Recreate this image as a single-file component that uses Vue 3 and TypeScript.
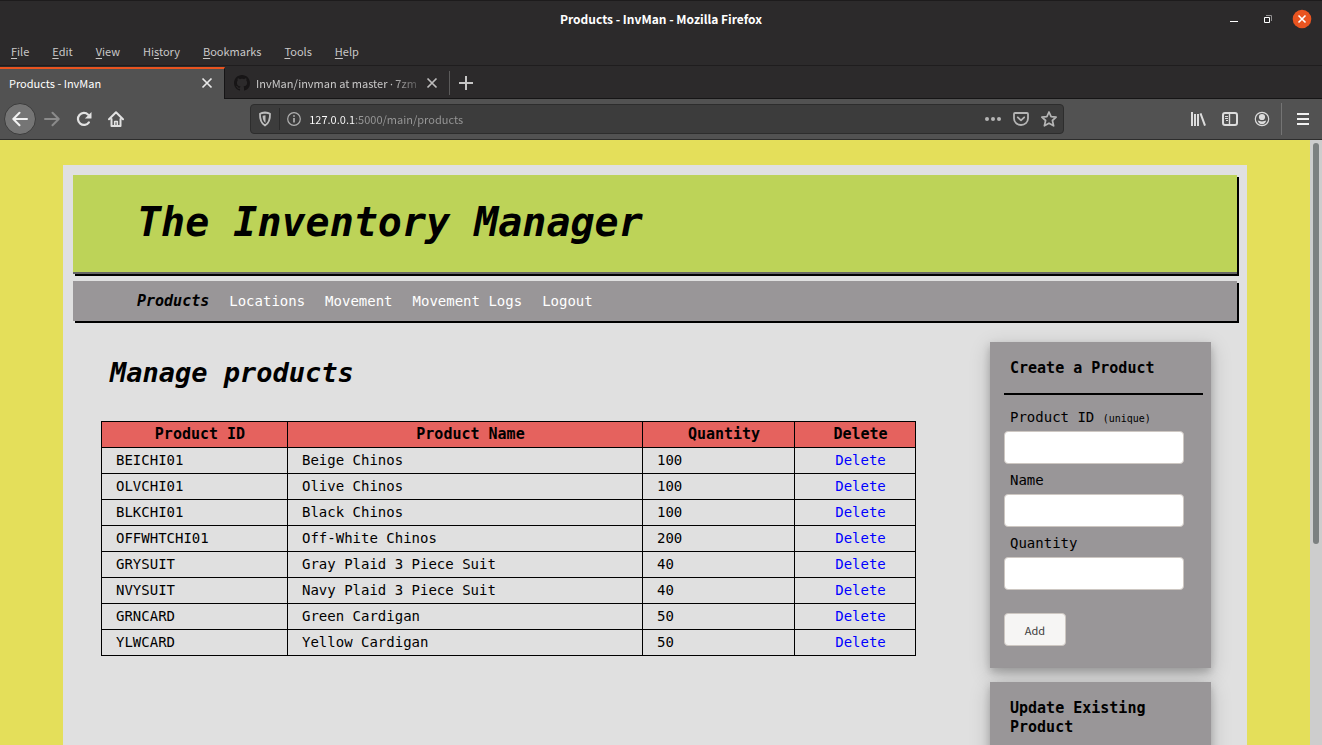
<script setup lang="ts">
import { ref } from 'vue'

interface Product {
  id: string
  name: string
  quantity: number
}

const menus = [
  { pre: '', key: 'F', post: 'ile' },
  { pre: '', key: 'E', post: 'dit' },
  { pre: '', key: 'V', post: 'iew' },
  { pre: 'Hi', key: 's', post: 'tory' },
  { pre: '', key: 'B', post: 'ookmarks' },
  { pre: '', key: 'T', post: 'ools' },
  { pre: '', key: 'H', post: 'elp' },
]

const links = ['Products', 'Locations', 'Movement', 'Movement Logs', 'Logout']

const products: Product[] = [
  { id: 'BEICHI01', name: 'Beige Chinos', quantity: 100 },
  { id: 'OLVCHI01', name: 'Olive Chinos', quantity: 100 },
  { id: 'BLKCHI01', name: 'Black Chinos', quantity: 100 },
  { id: 'OFFWHTCHI01', name: 'Off-White Chinos', quantity: 200 },
  { id: 'GRYSUIT', name: 'Gray Plaid 3 Piece Suit', quantity: 40 },
  { id: 'NVYSUIT', name: 'Navy Plaid 3 Piece Suit', quantity: 40 },
  { id: 'GRNCARD', name: 'Green Cardigan', quantity: 50 },
  { id: 'YLWCARD', name: 'Yellow Cardigan', quantity: 50 },
]

const address = ref('127.0.0.1:5000/main/products')
const newId = ref('')
const newName = ref('')
const newQuantity = ref('')
</script>

<template>
  <div class="window">
    <header class="titlebar">
      <span class="window-title">Products - InvMan - Mozilla Firefox</span>
      <div class="window-controls">
        <button class="icon-btn" aria-label="Minimize">
          <svg width="10" height="18"><path d="M1 11.500h8" stroke="#fff" /></svg>
        </button>
        <button class="icon-btn" aria-label="Restore">
          <svg width="10" height="18"><path d="M1.500 7.500h5v5h-5z" fill="none" stroke="#fff" /><path d="M3 5.500h5.500V11" fill="none" stroke="#918f90" /></svg>
        </button>
        <button class="icon-btn" aria-label="Close window">
          <svg width="20" height="20" viewBox="0 0 20 20"><circle cx="10" cy="10" r="9.300" fill="#e95420" /><path d="M6.500 6.500l7 7m0-7l-7 7" stroke="#fff" stroke-width="1.600" /></svg>
        </button>
      </div>
    </header>

    <nav class="menubar" aria-label="Menu">
      <button v-for="m in menus" :key="m.key + m.post" class="menu">{{ m.pre }}<span class="mnemonic">{{ m.key }}</span>{{ m.post }}</button>
    </nav>

    <div class="tabs">
      <div class="tab active">
        <button class="tab-label">Products - InvMan</button>
        <button class="icon-btn" aria-label="Close tab">
          <svg width="12" height="12" viewBox="0 0 12 12"><path d="M1.500 1.500l9 9m0-9l-9 9" stroke="#e8e8e8" stroke-width="1.700" /></svg>
        </button>
      </div>
      <div class="tab">
        <svg width="16" height="16" viewBox="0 0 16 16" fill="#171516"><path d="M8 0C3.580 0 0 3.580 0 8c0 3.540 2.290 6.530 5.470 7.590.4.070.550-.170.550-.380 0-.190-.010-.820-.010-1.490-2.010.370-2.530-.490-2.690-.940-.090-.230-.480-.940-.820-1.130-.280-.150-.680-.520-.010-.530.630-.010 1.080.580 1.230.820.720 1.210 1.870.870 2.330.660.070-.520.280-.870.510-1.070-1.780-.2-3.640-.890-3.640-3.950 0-.870.310-1.590.820-2.150-.080-.2-.360-1.020.080-2.120 0 0 .670-.210 2.200.820.640-.180 1.320-.270 2-.270s1.360.090 2 .270c1.530-1.040 2.200-.820 2.200-.820.440 1.100.160 1.920.080 2.120.510.560.820 1.270.820 2.150 0 3.070-1.870 3.750-3.650 3.950.290.250.540.730.540 1.480 0 1.070-.010 1.930-.010 2.200 0 .210.150.460.550.380A8.010 8.010 0 0 0 16 8c0-4.420-3.580-8-8-8z" /></svg>
        <button class="tab-label faded">InvMan/invman at master <span class="dot">·</span> 7zm</button>
        <button class="icon-btn" aria-label="Close tab">
          <svg width="12" height="12" viewBox="0 0 12 12"><path d="M1.500 1.500l9 9m0-9l-9 9" stroke="#bdbcbc" stroke-width="1.700" /></svg>
        </button>
      </div>
      <button class="icon-btn new-tab" aria-label="New tab">
        <svg width="14" height="14" viewBox="0 0 14 14"><path d="M7 0v14M0 7h14" stroke="#c6c5c5" stroke-width="2" /></svg>
      </button>
    </div>

    <div class="toolbar">
      <div class="group">
        <button class="icon-btn back" aria-label="Back">
          <svg width="16" height="16" viewBox="0 0 16 16" fill="none" stroke="#f2f2f2" stroke-width="2" stroke-linecap="round" stroke-linejoin="round"><path d="M15 8H1.500M7.500 1.800L1.300 8l6.200 6.200" /></svg>
        </button>
        <button class="icon-btn" aria-label="Forward">
          <svg width="16" height="16" viewBox="0 0 16 16" fill="none" stroke="#8b8b8b" stroke-width="2" stroke-linecap="round" stroke-linejoin="round"><path d="M1 8h13.500M8.500 1.800L14.700 8l-6.200 6.200" /></svg>
        </button>
        <button class="icon-btn" aria-label="Reload">
          <svg width="16" height="16" viewBox="0 0 16 16"><path d="M12.900 11.300A6 6 0 1 1 12.200 3.700" fill="none" stroke="#e2e2e2" stroke-width="2.200" stroke-linecap="round" /><path d="M15.500 1v6a.6.6 0 0 1-.6.6h-6z" fill="#e2e2e2" /></svg>
        </button>
        <button class="icon-btn" aria-label="Home">
          <svg width="16" height="16" viewBox="0 0 16 16" fill="none" stroke="#e2e2e2" stroke-width="2" stroke-linejoin="round" stroke-linecap="round"><path d="M1 8.200L8 1.200l7 7M3.500 8v7h9V8" /><path d="M6.700 15v-4.500h2.600V15" stroke-width="1.600" /></svg>
        </button>
      </div>
      <div class="urlbar">
        <button class="icon-btn" aria-label="Tracking protection">
          <svg width="14" height="16" viewBox="0 0 14 16"><path d="M7 1.500c2 .2 3.800.6 5 1.200.2 5.300-.8 9.300-5 11.800-4.200-2.500-5.200-6.500-5-11.800 1.200-.6 3-1 5-1.200z" fill="none" stroke="#bdbdbd" stroke-width="1.800" stroke-linejoin="round" /><path d="M7.500 4.300v7.600C5.200 10 4.600 7.900 4.600 4.800z" fill="#bdbdbd" /></svg>
        </button>
        <span class="url-sep"></span>
        <button class="icon-btn" aria-label="Site information">
          <svg width="14" height="14" viewBox="0 0 14 14"><circle cx="7" cy="7" r="6.300" fill="none" stroke="#b0b0b0" stroke-width="1.200" /><path d="M7 6v4.500M7 3.200v1.500" stroke="#b0b0b0" stroke-width="1.700" /></svg>
        </button>
        <input v-model="address" class="url" type="text" aria-label="Address" spellcheck="false" />
        <button class="icon-btn" aria-label="Page actions">
          <svg width="16" height="16" viewBox="0 0 16 16" fill="#b5b5b5"><circle cx="2" cy="8" r="2" /><circle cx="8" cy="8" r="2" /><circle cx="14" cy="8" r="2" /></svg>
        </button>
        <button class="icon-btn" aria-label="Save to Pocket">
          <svg width="16" height="16" viewBox="0 0 16 16" fill="none" stroke="#b5b5b5" stroke-width="1.800" stroke-linejoin="round" stroke-linecap="round"><path d="M2 2h12c.6 0 1 .4 1 1v4.500a7 6.500 0 0 1-14 0V3c0-.6.4-1 1-1z" /><path d="M4.800 6.300L8 9.300l3.200-3" /></svg>
        </button>
        <button class="icon-btn" aria-label="Bookmark this page">
          <svg width="16" height="16" viewBox="0 0 16 16" fill="none" stroke="#b5b5b5" stroke-width="1.700" stroke-linejoin="round"><path d="M8 1l2.100 4.600 5 .5-3.700 3.400 1.200 5.300L8 12.200l-4.600 2.600 1.200-5.300L.9 6.100l5-.5z" /></svg>
        </button>
      </div>
      <div class="group right">
        <button class="icon-btn" aria-label="Library">
          <svg width="16" height="16" viewBox="0 0 16 16" stroke="#dcdcdc" stroke-width="2"><path d="M2 1v14M5 3v12M8 3v12M10.500 2.400L15 14.700" /></svg>
        </button>
        <button class="icon-btn" aria-label="Sidebars">
          <svg width="16" height="16" viewBox="0 0 16 16" fill="none" stroke="#dcdcdc"><rect x="1" y="2" width="14" height="12" rx="2" stroke-width="2" /><path d="M7.500 2v12" stroke-width="1.400" /><path d="M3 5.500h3M3 7.500h3M4 9.500h2" /></svg>
        </button>
        <button class="icon-btn" aria-label="Account">
          <svg width="16" height="16" viewBox="0 0 16 16"><circle cx="8" cy="8" r="6.700" fill="none" stroke="#dcdcdc" stroke-width="1.200" /><circle cx="8" cy="6" r="3.100" fill="#dcdcdc" /><path d="M3.800 9.600c1 0 2.400 1 4.200 1s3.200-1 4.200-1c-.4 2.400-2.200 3.600-4.200 3.600s-3.800-1.200-4.200-3.600z" fill="#dcdcdc" /></svg>
        </button>
        <button class="icon-btn app-menu" aria-label="Open menu">
          <svg width="12" height="12" viewBox="0 0 12 12" stroke="#f0f0f0" stroke-width="2"><path d="M0 1h12M0 6h12M0 11h12" /></svg>
        </button>
      </div>
    </div>

    <div class="viewport">
      <div class="canvas">
        <div class="page">
          <header class="banner"><h1>The Inventory Manager</h1></header>
          <nav class="site-nav" aria-label="Site">
            <a v-for="(l, i) in links" :key="l" href="#" :class="{ current: i === 0 }">{{ l }}</a>
          </nav>
          <div class="columns">
            <main class="main">
              <h2>Manage products</h2>
              <table>
                <colgroup>
                  <col class="c-id" />
                  <col />
                  <col class="c-qty" />
                  <col class="c-del" />
                </colgroup>
                <thead>
                  <tr>
                    <th scope="col">Product ID</th>
                    <th scope="col">Product Name</th>
                    <th scope="col">Quantity</th>
                    <th scope="col">Delete</th>
                  </tr>
                </thead>
                <tbody>
                  <tr v-for="p in products" :key="p.id">
                    <td>{{ p.id }}</td>
                    <td>{{ p.name }}</td>
                    <td>{{ p.quantity }}</td>
                    <td class="center"><a href="#">Delete</a></td>
                  </tr>
                </tbody>
              </table>
            </main>
            <aside class="side">
              <form class="card" @submit.prevent>
                <h3>Create a Product</h3>
                <label for="new-id">Product ID <small>(unique)</small></label>
                <input id="new-id" v-model="newId" type="text" />
                <label for="new-name">Name</label>
                <input id="new-name" v-model="newName" type="text" />
                <label for="new-qty">Quantity</label>
                <input id="new-qty" v-model="newQuantity" type="text" />
                <button type="submit">Add</button>
              </form>
              <section class="card">
                <h3>Update Existing Product</h3>
              </section>
            </aside>
          </div>
        </div>
      </div>
      <div class="scrollbar"><div class="thumb"></div></div>
    </div>
  </div>
</template>

<style>
body {
  margin: 0;
  overflow: hidden;
}
</style>

<style scoped>
* {
  box-sizing: border-box;
}
.window {
  display: flex;
  flex-direction: column;
  height: 100vh;
  overflow: hidden;
  background: #2c2a2b;
  color: #c9c8c8;
  font: 11px/20px "Noto Sans CJK SC", "Noto Sans", sans-serif;
}
button {
  font: inherit;
  color: inherit;
  margin: 0;
  padding: 0;
  border: 0;
  background: none;
}
svg {
  display: block;
  flex: none;
}
.icon-btn {
  display: flex;
  flex: none;
  align-items: center;
  justify-content: center;
}

.titlebar {
  display: grid;
  grid-template-columns: 1fr auto 1fr;
  align-items: center;
  height: 37px;
  flex: none;
  border-top: 1px solid #1d1b1c;
}
.window-title {
  grid-column: 2;
  color: #fff;
  font-size: 12px;
  font-weight: 700;
}
.window-controls {
  display: flex;
  align-items: center;
  justify-content: flex-end;
  gap: 24px;
  padding-right: 10px;
}
.window-controls .icon-btn:last-child {
  margin-left: -5px;
}
.menubar {
  display: flex;
  align-items: center;
  gap: 23px;
  height: 29px;
  flex: none;
  padding-left: 11px;
  border-bottom: 1px solid #1f1d1e;
}
.mnemonic {
  text-decoration: underline;
  text-underline-offset: 2px;
}

.tabs {
  display: flex;
  height: 33px;
  flex: none;
  border-bottom: 1px solid #161516;
}
.tab {
  display: flex;
  align-items: center;
  gap: 6px;
  width: 224px;
  padding: 2px 11px 0 9px;
}
.tab.active {
  width: 225px;
  height: 33px;
  background: #525252;
  border-top: 2px solid #e95420;
  border-right: 1px solid #161516;
  margin-top: 1px;
  padding: 0 11px 3px 9px;
  color: #fff;
}
.tab-label {
  flex: 1;
  min-width: 0;
  overflow: hidden;
  white-space: nowrap;
  text-align: left;
}
.tab-label.faded {
  mask-image: linear-gradient(to right, #000 82%, transparent 104%);
}
.dot {
  font-family: "Noto Sans", sans-serif;
  line-height: 1;
}
.new-tab {
  margin: 5px 0 3px;
  padding: 0 9px;
  border-left: 1px solid #5b5a5a;
}

.toolbar {
  display: flex;
  align-items: center;
  height: 41px;
  flex: none;
  padding: 0 4px;
  background: #525252;
  border-bottom: 1px solid #2d2d2d;
}
.group {
  display: flex;
  align-items: center;
}
.group .icon-btn {
  width: 32px;
  height: 32px;
}
.group .back {
  border: 1px solid #3c3c3c;
  border-radius: 50%;
  background: #757575;
}
.urlbar {
  display: flex;
  align-items: center;
  gap: 12px;
  flex: 1;
  height: 30px;
  margin: 0 9%;
  padding: 0 6px 0 7px;
  background: #3c3c3c;
  border: 1px solid #2d2d2d;
  border-radius: 4px;
}
.url-sep {
  width: 1px;
  height: 22px;
  margin: 0 -5px;
  background: #2b2b2b;
}
.url {
  flex: 1;
  min-width: 0;
  height: 28px;
  margin-left: -4px;
  padding: 0;
  border: 0;
  outline: 0;
  font: inherit;
  color: transparent;
  background: linear-gradient(to right, #fff 46px, #999 46px);
  background-clip: text;
}
.group .app-menu {
  width: 42px;
  margin-left: 3px;
  margin-right: -5px;
  border-left: 1px solid #747474;
}

.viewport {
  display: flex;
  flex: 1;
  min-height: 0;
}
.canvas {
  flex: 1;
  overflow: hidden;
  padding: 25px 63px 0;
  background: #e4df5a;
}
.scrollbar {
  flex: none;
  width: 12px;
  padding: 3px;
  background: #cdcdcd;
}
.thumb {
  width: 6px;
  height: 67%;
  border-radius: 3px;
  background: #7c8080;
}
.page {
  min-height: 100%;
  padding: 10px;
  background: #e0e0e0;
  color: #000;
  font: 14px/20px "DejaVu Sans Mono", monospace;
}
h1,
h2,
h3 {
  margin: 0;
  font-weight: 700;
}
.banner {
  padding: 23px 64px 25px;
  background: #bdd358;
  border-bottom: 2px solid #666;
  box-shadow: 2px 2px #000;
}
h1 {
  font-size: 40px;
  line-height: 49px;
  font-style: italic;
}
.site-nav {
  display: flex;
  gap: 20px;
  margin-top: 7px;
  padding: 10px 64px;
  background: #999698;
  box-shadow: 2px 2px #000;
}
.site-nav a {
  color: #fff;
  text-decoration: none;
}
.site-nav .current {
  color: #000;
  font-size: 15px;
  font-weight: 700;
  font-style: italic;
}
.columns {
  display: flex;
  gap: 74px;
  padding: 21px 26px 0 28px;
}
.main {
  flex: 1;
  padding-top: 11px;
}
h2 {
  padding-left: 9px;
  font-size: 27px;
  line-height: 40px;
  font-style: italic;
}
table {
  width: 100%;
  margin-top: 28px;
  table-layout: fixed;
  border-collapse: collapse;
}
.c-id {
  width: 186px;
}
.c-qty {
  width: 152px;
}
.c-del {
  width: 121px;
}
th,
td {
  height: 26px;
  padding: 0 0 2px 14px;
  border: 1px solid #000;
  text-align: left;
}
th {
  padding-left: 11px;
  background: #e5625e;
  font-size: 15px;
  text-align: center;
}
.center {
  padding-left: 11px;
  text-align: center;
}
td a {
  color: #00f;
  text-decoration: none;
}
.side {
  display: flex;
  flex-direction: column;
  flex: none;
  gap: 14px;
  width: 221px;
}
.card {
  display: flex;
  flex-direction: column;
  padding: 17px 8px 22px 14px;
  background: #999698;
  box-shadow: 0 4px 8px rgba(0, 0, 0, 0.2), 0 6px 20px rgba(0, 0, 0, 0.19);
}
h3 {
  margin-bottom: 6px;
  padding: 0 0 15px 6px;
  border-bottom: 2px solid #000;
  font-size: 15px;
  line-height: 19px;
}
label {
  padding: 2px 0 0 6px;
  line-height: 28px;
}
small {
  font-size: 10px;
  line-height: 10px;
}
.card input {
  width: 180px;
  height: 33px;
  padding: 0 8px;
  border: 1px solid #cdc7c2;
  border-radius: 4px;
  background: #fff;
  font: inherit;
}
.card button {
  align-self: flex-start;
  width: 62px;
  height: 33px;
  margin-top: 23px;
  border: 1px solid #cdc7c2;
  border-radius: 4px;
  background: #f6f5f4;
  color: #3d3d3d;
  font: 11px/20px "Noto Sans CJK SC", "Noto Sans", sans-serif;
}
</style>
